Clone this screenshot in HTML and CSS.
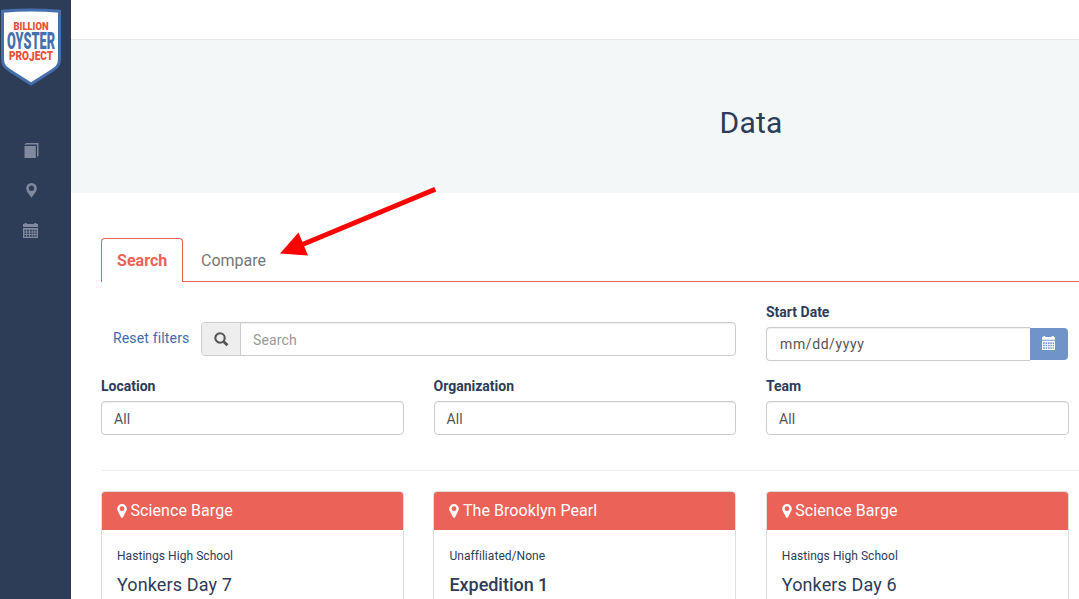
FILE: index.html
```html
<!DOCTYPE html>
<html lang="en">
<head>
<meta charset="utf-8">
<title>Data</title>
<link rel="stylesheet" href="styles.css">
</head>
<body>
<svg class="defs" width="0" height="0">
  <symbol id="pin" viewBox="0 0 10 14"><path fill-rule="evenodd" d="M5 0a4.8 4.8 0 0 0-4.8 4.8C.2 6 .8 7 1.200 7.800L4 13.200q1 1.500 2 0L8.800 7.800C9.200 7 9.800 6 9.800 4.800A4.800 4.800 0 0 0 5 0zm0 2.300a2.400 2.400 0 1 1 0 4.800 2.400 2.400 0 0 1 0-4.800z"/></symbol>
  <symbol id="calendar" viewBox="0 0 14 15"><path fill-rule="evenodd" d="M0 1h1.500V0h2v1h7V0h2v1H14v3H0zM0 5h14v10H0zM1.300 6.800v1.700h1.700V6.800zm2.600 0v1.700h1.700V6.800zm2.600 0v1.700h1.700V6.800zm2.500 0v1.700h1.600V6.800zm2.500 0v1.700h1.300V6.800zM1.300 9.400v1.700h1.700V9.400zm2.600 0v1.700h1.700V9.400zm2.600 0v1.700h1.700V9.400zm2.500 0v1.700h1.600V9.400zm2.500 0v1.700h1.300V9.400zM1.300 12v1.700h1.700V12zm2.600 0v1.700h1.700V12zm2.600 0v1.700h1.700V12zm2.500 0v1.700h1.600V12zm2.500 0v1.700h1.300V12z"/></symbol>
</svg>
<div class="app">
  <aside class="sidebar">
    <svg class="logo" width="62" height="78" viewBox="0 0 62 78">
      <path d="M2.500 3.300Q31 .5 59.500 3.300V51C59.500 58 56 60 50 64L31 76 12 64C6 60 2.500 58 2.500 51z" fill="#fff" stroke="#466fae" stroke-width="3"/>
      <text class="logo-red" x="13.500" y="21.500" textLength="35" lengthAdjust="spacingAndGlyphs" font-size="11.500">BILLION</text>
      <text class="logo-blue" x="7" y="40.800" textLength="48" lengthAdjust="spacingAndGlyphs" font-size="24.500">OYSTER</text>
      <text class="logo-red" x="9" y="51.500" textLength="44" lengthAdjust="spacingAndGlyphs" font-size="12">PRO<tspan dy="1.500">J</tspan><tspan dy="-1.500">ECT</tspan></text>
    </svg>
    <nav class="side-nav">
      <a><svg width="16" height="15" viewBox="0 0 16 15"><path d="M1.500 3h11.300v12H1.500zM1.500 2l1.500-2h12.500v12.800l-1.500 1.200V1.500H3.500L3 2z"/></svg></a>
      <a><svg class="nav-pin" width="11" height="15" viewBox="0 0 11 15"><path fill-rule="evenodd" d="M5.500 0A5.300 5.300 0 0 0 .200 5.300C.2 9 4 12 5.500 15 7 12 10.800 9 10.800 5.300A5.300 5.300 0 0 0 5.500 0zm0 2.600a2.700 2.700 0 1 1 0 5.400 2.700 2.700 0 0 1 0-5.400z"/></svg></a>
      <a><svg class="nav-cal" width="15" height="15" viewBox="0 0 14 15" preserveAspectRatio="none"><use href="#calendar" width="14" height="15"/></svg></a>
    </nav>
  </aside>
  <main class="main">
    <div class="topbar"></div>
    <header class="hero"><h1>Data</h1></header>
    <div class="content">
      <div class="tabs"><a class="tab active">Search</a><a class="tab">Compare</a></div>
      <form class="filters">
        <div class="search-row">
          <a class="reset">Reset filters</a>
          <div class="search-box">
            <span class="search-icon"><svg width="15" height="15" viewBox="0 0 15 15"><circle cx="6" cy="6" r="4.700"/><path d="M9.500 9.500l4 3.800"/></svg></span>
            <span class="search-input">Search</span>
          </div>
        </div>
        <div class="field date">
          <label>Start Date</label>
          <div class="date-group"><span class="control date-input">mm/dd/yyyy</span><span class="date-button"><svg width="13" height="14"><use href="#calendar"/></svg></span></div>
        </div>
        <div class="field first"><label>Location</label><span class="control">All</span></div>
        <div class="field"><label>Organization</label><span class="control">All</span></div>
        <div class="field"><label>Team</label><span class="control">All</span></div>
      </form>
      <div class="cards">
        <article class="card"><h2><svg width="10" height="14"><use href="#pin"/></svg>Science Barge</h2><div class="card-body"><p>Hastings High School</p><h3>Yonkers Day 7</h3></div></article>
        <article class="card"><h2><svg width="10" height="14"><use href="#pin"/></svg>The Brooklyn Pearl</h2><div class="card-body"><p>Unaffiliated/None</p><h3 class="strong">Expedition 1</h3></div></article>
        <article class="card"><h2><svg width="10" height="14"><use href="#pin"/></svg>Science Barge</h2><div class="card-body"><p>Hastings High School</p><h3>Yonkers Day 6</h3></div></article>
      </div>
    </div>
  </main>
</div>
<svg class="arrow" width="160" height="72" viewBox="0 0 160 72"><path d="M155.300 4.200L20 60.500" stroke="#f00" stroke-width="5"/><path d="M0 68.500L18.500 47.500 28 70.500z" fill="#f00"/></svg>
</body>
</html>
```

FILE: styles.css
```css
* { box-sizing: border-box; }
html, body { margin: 0; height: 100%; overflow: hidden; }
body { font-family: Roboto, sans-serif; font-size: 14px; color: #2d3c58; background: #fff; letter-spacing: .16px; }
h1, h2, h3, p { margin: 0; font-weight: 400; }
.defs { position: absolute; }
.app { display: flex; height: 599px; overflow: hidden; }
.sidebar { flex: 0 0 71px; background: #2d3c57; padding-top: 8px; }
.logo { display: block; overflow: visible; }
.logo text { font-family: Roboto, sans-serif; font-weight: 900; letter-spacing: 0; }
.logo-red { fill: #e94f3b; }
.logo-blue { fill: #466fae; }
.side-nav { display: flex; flex-direction: column; margin-top: 44px; padding-left: 23px; fill: #818a9d; }
.side-nav a { height: 40px; display: flex; align-items: center; }
.nav-pin { margin-left: 3px; }
.main { flex: 0 0 1360px; }
.topbar { height: 40px; border-bottom: 1px solid #e5e7e8; }
.hero { height: 153px; background: #f3f7f8; display: flex; align-items: center; justify-content: center; padding-top: 12px; }
.hero h1 { font-size: 30px; line-height: 33px; letter-spacing: .25px; }
.content { padding: 45px 30px 0; }
.tabs { display: flex; height: 44px; border-bottom: 1px solid #eb6258; }
.tab { height: 43px; padding: 0 17px 0 18px; font-size: 16px; line-height: 45px; color: #777; letter-spacing: 0; }
.tab.active { width: 82px; height: 44px; padding: 0 0 0 15px; border: 1px solid #eb6258; border-bottom: 0; border-radius: 4px 4px 0 0; background: #fff; color: #eb6258; font-weight: 700; line-height: 43px; letter-spacing: .05px; }
.filters { display: grid; grid-template-columns: repeat(4, 302.5px); column-gap: 30px; padding-top: 21px; height: 189px; grid-template-rows: 74px 74px; border-bottom: 1px solid #eee; }
.search-row { grid-column: span 2; display: flex; padding-top: 19px; }
.reset { width: 100px; padding-left: 12px; line-height: 32px; color: #416bae; }
.search-box { flex: 1; height: 34px; display: flex; border: 1px solid #ccc; border-radius: 4px; overflow: hidden; box-shadow: inset 0 1px 1px rgba(0,0,0,.06); }
.search-icon { width: 39px; border-right: 1px solid #ccc; background: #eee; display: flex; align-items: center; justify-content: center; }
.search-icon svg { fill: none; stroke: #555; stroke-width: 2.1; }
.search-icon path { stroke-width: 2.8; }
.search-input { padding-left: 12px; line-height: 35px; color: #999; }
.first { grid-column: 1; }
.field label { display: block; height: 24px; line-height: 19px; font-weight: 700; letter-spacing: 0; }
.control { display: block; height: 34px; border: 1px solid #ccc; border-radius: 4px; padding-left: 12px; line-height: 34px; color: #555; box-shadow: inset 0 1px 1px rgba(0,0,0,.06); }
.date-group { display: flex; align-items: center; }
.date-input { width: 264px; border-right: 0; border-radius: 4px 0 0 4px; padding-left: 13px; line-height: 33px; letter-spacing: .6px; }
.date-button { width: 38px; height: 32px; padding: 0 2px 2px 0; background: #7094c9; border-radius: 0 4px 4px 0; fill: #fff; display: flex; align-items: center; justify-content: center; }
.cards { display: grid; grid-template-columns: repeat(4, 302.9px); gap: 29.5px; padding-top: 20px; }
.card { height: 180px; border: 1px solid #ddd; border-radius: 4px; overflow: hidden; }
.card h2 { height: 38px; padding-left: 15px; background: #eb6258; color: #fff; fill: #fff; font-size: 16px; line-height: 35px; padding-bottom: 2px; display: flex; align-items: center; gap: 3.5px; letter-spacing: .07px; }
.card h2 svg { margin-top: 1px; }
.card-body { padding: 18px 15px; }
.card p { font-size: 12px; line-height: 17px; letter-spacing: .05px; }
.card h3 { margin-top: 9px; font-size: 18px; line-height: 22px; letter-spacing: .12px; }
.card h3.strong { font-weight: 500; letter-spacing: -.03px; }
.arrow { position: absolute; left: 280px; top: 185px; }
```
